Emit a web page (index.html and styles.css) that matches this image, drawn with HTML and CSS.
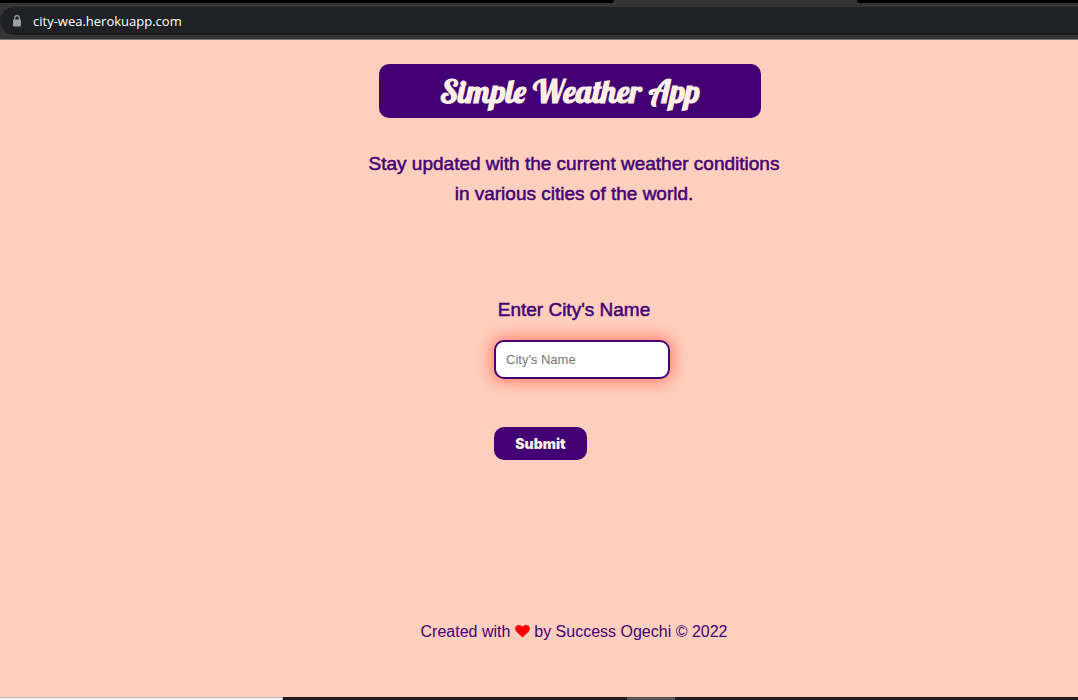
FILE: index.html
```html
<!DOCTYPE html>
<html lang="en">
<head>
<meta charset="utf-8">
<title>Simple Weather App</title>
<link rel="stylesheet" href="styles.css">
</head>
<body>
<header class="browser">
  <div class="tabs"><span class="tab-left"></span><span class="tab-right"></span></div>
  <div class="address">
    <svg class="lock" viewBox="0 0 8 12" aria-hidden="true"><path d="M1.700 5V3a2.300 2.300 0 0 1 4.600 0v2" fill="none" stroke="#9aa0a6" stroke-width="1.2"/><rect y="4.500" width="8" height="7" rx="1" fill="#9aa0a6"/></svg>
    <span>city-wea.herokuapp.com</span>
  </div>
</header>
<main class="page">
  <h1 class="title">Simple Weather App</h1>
  <p class="intro">Stay updated with the current weather conditions<br>in various cities of the world.</p>
  <form class="search">
    <label class="label" for="city">Enter City's Name</label>
    <input class="city" id="city" type="text" placeholder="City's Name">
    <button class="submit" type="submit">Submit</button>
  </form>
  <footer class="credit">Created with <svg class="heart" viewBox="0 0 16 14" role="img" aria-label="love"><path d="M8 13.500L1.500 7.300C-.5 5.200 -.3 2.300 1.600 .9C3.600 -.5 6.400 0 8 2.100C9.600 0 12.400 -.5 14.400 .9C16.300 2.300 16.500 5.200 14.500 7.300Z" fill="#f00"/></svg> by Success Ogechi © 2022</footer>
</main>
<div class="taskbar"><span class="task-search"></span><span class="task-active"></span></div>
</body>
</html>
```
FILE: styles.css
```css
* { box-sizing: border-box; }
body {
  margin: 0;
  min-height: 100vh;
  display: flex;
  flex-direction: column;
  background: #ffcfbd;
  color: #430075;
  font-family: "Liberation Sans", Arial, sans-serif;
}
.browser {
  background: #353535;
  border-bottom: 1px solid #777;
}
.tabs {
  display: flex;
  justify-content: space-between;
  height: 3px;
}
.tab-left {
  width: 57%;
  background: #000;
  border-bottom-right-radius: 3px;
}
.tab-right {
  width: 221px;
  background: #000;
  border-bottom-left-radius: 3px;
}
.address {
  display: flex;
  align-items: center;
  gap: 12px;
  height: 28px;
  margin: 4px 0;
  padding-left: 13px;
  border-radius: 14px 0 0 14px;
  background: #202124;
  color: #fff;
  font: 13px "Open Sans", sans-serif;
}
.lock { width: 8px; height: 12px; }
.page {
  flex: 1;
  display: flex;
  flex-direction: column;
  align-items: center;
  padding: 24px 0 0 70px;
}
.title {
  width: 382px;
  margin: 0 8px 0 0;
  padding: 7px 0;
  border-radius: 10px;
  background: #430075;
  color: #fff0e6;
  font: bold 32px/40px Lobster, "Liberation Serif", serif;
  text-align: center;
}
.intro {
  margin: 31px 0 86px;
  font-size: 19px;
  line-height: 30px;
  text-align: center;
  -webkit-text-stroke: 0.5px #430075;
}
.search {
  display: flex;
  flex-direction: column;
  align-items: flex-start;
  width: 160px;
}
.label {
  align-self: center;
  font-size: 19px;
  line-height: 30px;
  margin-bottom: 15px;
  white-space: nowrap;
  -webkit-text-stroke: 0.5px #430075;
}
.city {
  width: 176px;
  height: 39px;
  padding: 0 10px;
  border: 2px solid #430075;
  border-radius: 10px;
  background: #fff;
  box-shadow: 0 0 15px 3px #ff7f6b;
  font: 13px "Liberation Sans", Arial, sans-serif;
}
.city::placeholder { color: #757575; }
.submit {
  width: 93px;
  height: 33px;
  margin-top: 48px;
  padding: 0;
  border: 0;
  border-radius: 10px;
  background: #430075;
  color: #fff0e6;
  font: 900 14px Inter, sans-serif;
}
.credit {
  margin-top: 162px;
  font-size: 16px;
  line-height: 20px;
}
.heart { width: 15px; height: 13px; vertical-align: -1px; }
.taskbar {
  display: flex;
  height: 3px;
  background: #231d20;
}
.task-search {
  width: 283px;
  margin-right: 344px;
  background: #f2f2f2;
  border: solid #bbb;
  border-width: 1px 1px 0 0;
}
.task-active { width: 48px; background: #555; }
```
